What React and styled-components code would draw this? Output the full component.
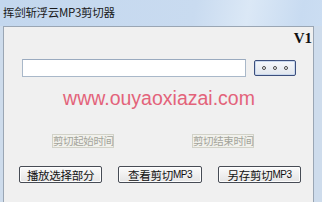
import React from "react";
import styled, { createGlobalStyle } from "styled-components";

const Global = createGlobalStyle`
  html, body { margin: 0; padding: 0; background: #f0f0f0; }
  body { width: 322px; height: 202px; overflow: hidden; }
`;

const Win = styled.div`
  width: 322px;
  height: 202px;
  display: flex;
  flex-direction: column;
  background: linear-gradient(100deg, #c3d7ee 0%, #c9dbf0 55%, #dbe8f6 70%, #c8dbf1 85%, #cfe0f3 100%);
  font-family: "Noto Sans CJK SC", "Liberation Sans", sans-serif;
`;

const TitleBar = styled.div`
  height: 26px;
  display: flex;
  align-items: center;
  padding: 0 0 2px 3px;
  box-sizing: border-box;
  font-size: 11.5px;
  color: #1a1a1a;
  letter-spacing: -0.3px;
`;

const Frame = styled.div`
  flex: 1;
  display: flex;
  padding: 0 8px 0 3px;
  background: #cedcec;
`;

const Client = styled.div`
  flex: 1;
  display: flex;
  flex-direction: column;
  background: #f0f0f0;
  border: 1px solid #9aa6b4;
  border-bottom: none;
`;

const VersionRow = styled.div`
  height: 18px;
  display: flex;
  justify-content: flex-end;
  align-items: center;
  padding: 2px 1px 0 0;
  font-family: "Liberation Serif", serif;
  font-weight: bold;
  font-size: 15px;
  color: #111;
`;

const InputRow = styled.div`
  display: flex;
  align-items: center;
  gap: 8px;
  margin-top: 12px;
  padding-left: 18px;
  height: 18px;
`;

const TextBox = styled.div`
  width: 224px;
  height: 18px;
  box-sizing: border-box;
  background: #fff;
  border: 1px solid #a9b8c9;
  border-top-color: #9aaabf;
`;

const BrowseBtn = styled.div`
  width: 42px;
  height: 16px;
  box-sizing: border-box;
  border: 1px solid #3c4f7d;
  border-radius: 2px;
  background: linear-gradient(#f6f8fb, #e1e6ee);
  box-shadow: inset 0 0 0 1px #c9d8ee;
  display: flex;
  align-items: center;
  justify-content: center;
  gap: 7px;
`;

const Dot = styled.span`
  width: 2px;
  height: 2px;
  border-radius: 50%;
  border: 1px solid #444;
  box-sizing: content-box;
  background: #fff;
`;

const Url = styled.div`
  margin-top: 10px;
  height: 22px;
  line-height: 22px;
  text-align: center;
  padding-left: 1px;
  font-family: "Liberation Sans", Arial, sans-serif;
  font-size: 19.5px;
  color: #e3637a;
`;

const LabelRow = styled.div`
  display: flex;
  margin-top: 25px;
  padding-left: 48px;
  gap: 78px;
`;

const DisabledLabel = styled.div`
  width: 62px;
  height: 14px;
  box-sizing: border-box;
  border: 1px solid #d2d2c8;
  background: #f1f1ec;
  font-size: 10.5px;
  line-height: 12px;
  color: #a3a39a;
  text-align: center;
  letter-spacing: -0.4px;
  white-space: nowrap;
`;

const ButtonRow = styled.div`
  display: flex;
  margin-top: 18px;
  padding-left: 15px;
  gap: ${(p) => p.$gap}px;
`;

const Btn = styled.div`
  width: ${(p) => p.$w}px;
  height: 17px;
  box-sizing: border-box;
  border: 1px solid #474c55;
  border-radius: 2px;
  background: linear-gradient(#fbfbfb, #e4e4e4);
  box-shadow: inset 0 0 0 1px #fdfdfd;
  display: flex;
  align-items: center;
  justify-content: center;
  font-size: 11.5px;
  color: #111;
  white-space: nowrap;
  letter-spacing: -0.3px;
`;

const Mono = styled.span`
  font-family: "Liberation Sans Narrow", "Liberation Sans", sans-serif;
  font-size: 10px;
  letter-spacing: -0.5px;
`;

export default function App() {
  return (
    <>
      <Global />
      <Win>
        <TitleBar>挥剑斩浮云MP3剪切器</TitleBar>
        <Frame>
          <Client>
            <VersionRow>V1</VersionRow>
            <InputRow>
              <TextBox />
              <BrowseBtn>
                <Dot />
                <Dot />
                <Dot />
              </BrowseBtn>
            </InputRow>
            <Url>www.ouyaoxiazai.com</Url>
            <LabelRow>
              <DisabledLabel>剪切起始时间</DisabledLabel>
              <DisabledLabel>剪切结束时间</DisabledLabel>
            </LabelRow>
            <ButtonRow $gap={16}>
              <Btn $w={83}>播放选择部分</Btn>
              <Btn $w={84}>查看剪切<Mono>MP3</Mono></Btn>
              <Btn $w={83}>另存剪切<Mono>MP3</Mono></Btn>
            </ButtonRow>
          </Client>
        </Frame>
      </Win>
    </>
  );
}
